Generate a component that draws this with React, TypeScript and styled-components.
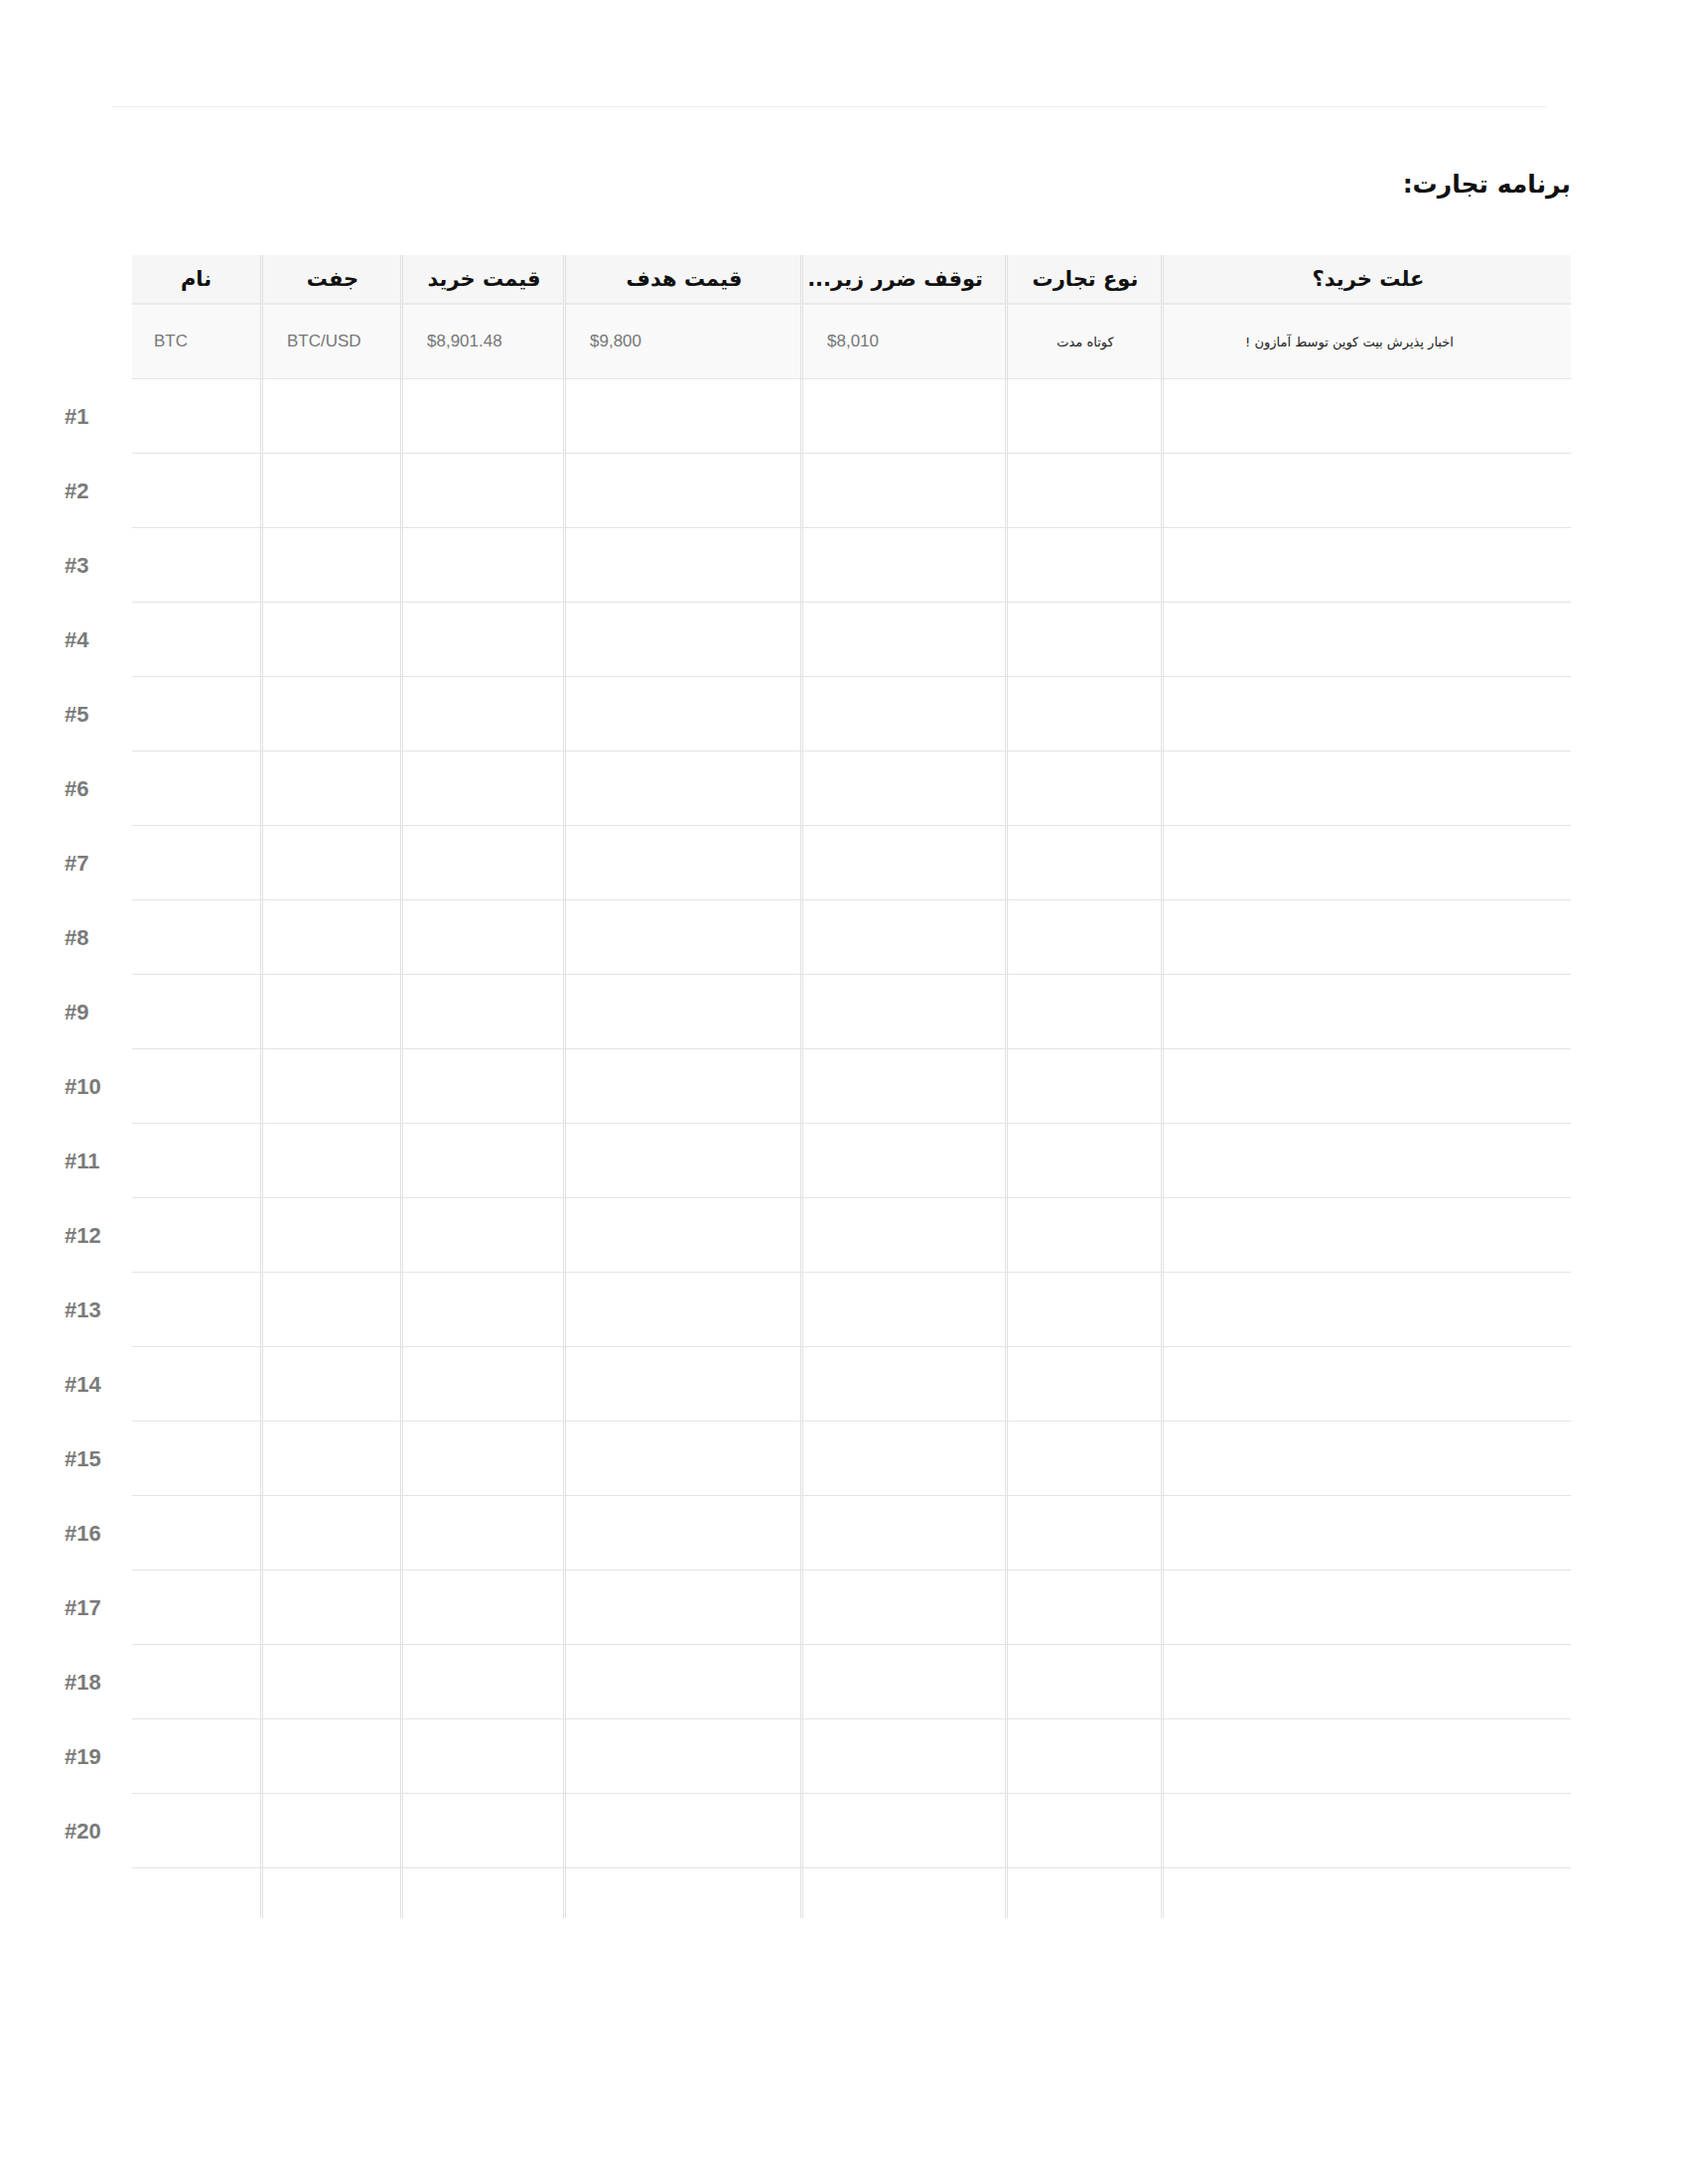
import React from 'react';
import styled, { createGlobalStyle } from 'styled-components';

const GlobalStyle = createGlobalStyle`
  * {
    box-sizing: border-box;
  }
  body {
    margin: 0;
    background: #ffffff;
    font-family: "Liberation Sans", Arial, sans-serif;
  }
`;

const columns = '129px 141px 164px 239px 206px 157px 413px';

const Page = styled.div`
  width: 1700px;
  min-height: 2200px;
  padding: 107px 118px 0 63px;
`;

const TopRule = styled.div`
  height: 1px;
  background: #efefef;
  margin: 0 24px 0 49px;
`;

const Title = styled.h1`
  margin: 58px 0 0;
  direction: rtl;
  text-align: right;
  font-family: "DejaVu Sans", sans-serif;
  font-size: 25px;
  line-height: 40px;
  font-weight: 700;
  color: #111;
`;

const Sheet = styled.div`
  margin-top: 51px;
  display: flex;
  flex-direction: column;
`;

const Line = styled.div`
  display: flex;
  align-items: stretch;
`;

const RowLabel = styled.div`
  width: 70px;
  flex: none;
  display: flex;
  align-items: center;
  font-family: "Liberation Sans", Arial, sans-serif;
  font-weight: 700;
  font-size: 22px;
  color: #7a7a7a;
  padding-left: 2px;
`;

const Row = styled.div<{ $kind: 'head' | 'data' | 'empty' | 'tail' }>`
  flex: 1;
  display: grid;
  grid-template-columns: ${columns};
  height: ${p => (p.$kind === 'head' || p.$kind === 'tail' ? '50px' : '75px')};
  background: ${p => (p.$kind === 'head' ? '#f6f6f6' : p.$kind === 'data' ? '#f9f9f9' : '#ffffff')};
  border-bottom: ${p => (p.$kind === 'tail' ? 'none' : p.$kind === 'head' ? '2px solid #e9e9e9' : '1px solid #e4e4e4')};
`;

const Cell = styled.div<{ $align?: 'left' | 'center'; $shift?: number }>`
  display: flex;
  align-items: center;
  justify-content: ${p => (p.$align === 'center' ? 'center' : 'flex-start')};
  padding: 0 ${p => 22 + (p.$shift ?? 0)}px 0 22px;
  & + & {
    border-left: 3px double #e1e1e1;
    padding-left: 24px;
  }
`;

const HeadText = styled.span`
  width: 100%;
  text-align: center;
  direction: rtl;
  font-family: "DejaVu Sans", sans-serif;
  font-weight: 700;
  font-size: 21px;
  color: #111;
  white-space: nowrap;
`;

const Value = styled.span`
  font-family: "Liberation Sans", Arial, sans-serif;
  font-size: 17px;
  color: #777;
`;

const Note = styled.span`
  direction: rtl;
  font-family: "DejaVu Sans", sans-serif;
  font-size: 13px;
  color: #222;
  white-space: nowrap;
`;

const headers = ['نام', 'جفت', 'قیمت خرید', 'قیمت هدف', 'توقف ضرر زیر...', 'نوع تجارت', 'علت خرید؟'];

const App = () => {
  const rows = Array.from({ length: 20 }, (_, i) => i + 1);

  return (
    <>
      <GlobalStyle />
      <Page>
        <TopRule />
        <Title>برنامه تجارت:</Title>
        <Sheet>
          <Line>
            <RowLabel />
            <Row $kind="head">
              {headers.map(h => (
                <Cell key={h} $align="center">
                  <HeadText>{h}</HeadText>
                </Cell>
              ))}
            </Row>
          </Line>
          <Line>
            <RowLabel />
            <Row $kind="data">
              <Cell><Value>BTC</Value></Cell>
              <Cell><Value>BTC/USD</Value></Cell>
              <Cell><Value>$8,901.48</Value></Cell>
              <Cell><Value>$9,800</Value></Cell>
              <Cell><Value>$8,010</Value></Cell>
              <Cell $align="center"><Note>کوتاه مدت</Note></Cell>
              <Cell $align="center" $shift={38}><Note>اخبار پذیرش بیت کوین توسط آمازون !</Note></Cell>
            </Row>
          </Line>
          {rows.map(n => (
            <Line key={n}>
              <RowLabel>#{n}</RowLabel>
              <Row $kind="empty">
                {headers.map(h => <Cell key={h} />)}
              </Row>
            </Line>
          ))}
          <Line>
            <RowLabel />
            <Row $kind="tail">
              {headers.map(h => <Cell key={h} />)}
            </Row>
          </Line>
        </Sheet>
      </Page>
    </>
  );
};

export default App;
